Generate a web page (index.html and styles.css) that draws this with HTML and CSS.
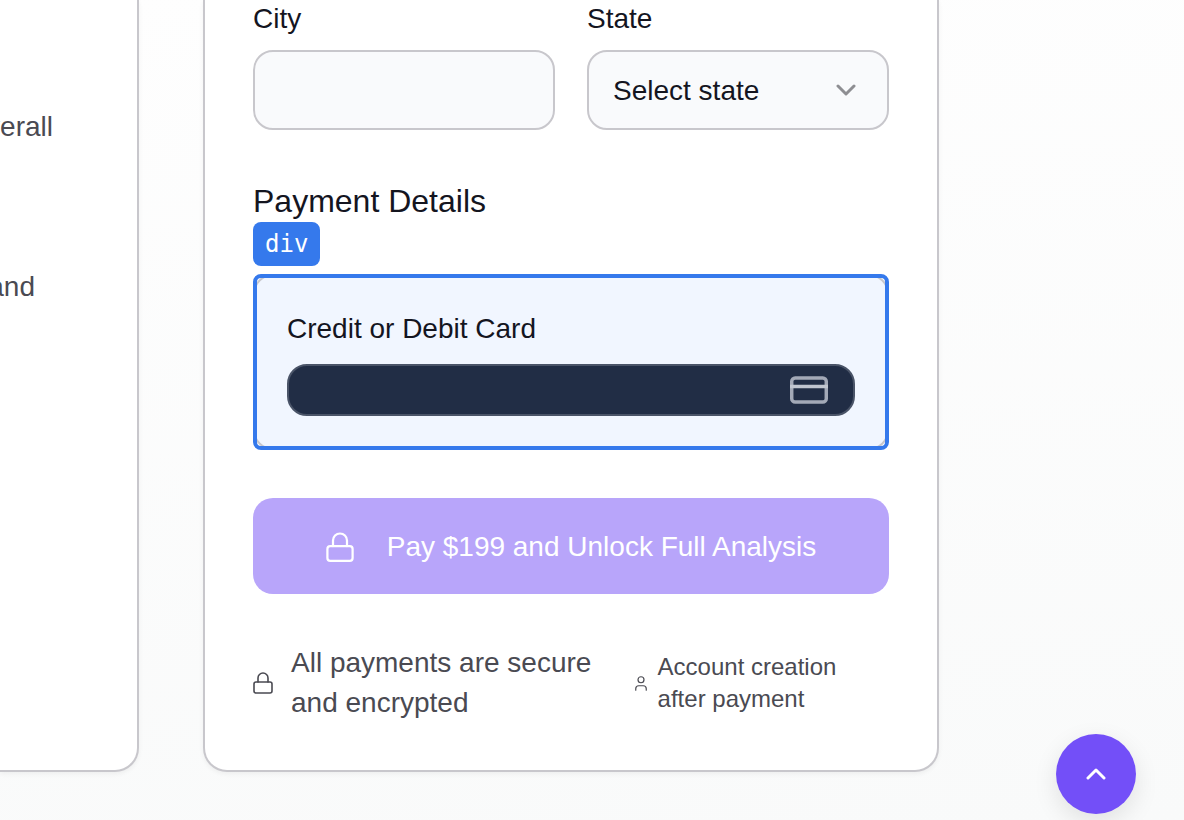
FILE: index.html
```html
<!DOCTYPE html>
<html lang="en">
<head>
<meta charset="utf-8">
<meta name="viewport" content="width=device-width, initial-scale=1">
<title>Payment Details</title>
<link rel="stylesheet" href="styles.css">
</head>
<body>
<main class="page">
  <section class="card summary">
    <p class="summary-line">overall</p>
    <p class="summary-line summary-line-short">and</p>
  </section>
  <form class="card checkout">
    <div class="fields">
      <div class="field">
        <label for="city">City</label>
        <input class="control" id="city" type="text">
      </div>
      <div class="field">
        <label for="state">State</label>
        <div class="select-wrap">
          <select class="control" id="state"><option>Select state</option></select>
          <svg class="select-arrow" viewBox="0 0 20 12" aria-hidden="true"><path d="M2 2l8 8 8-8"/></svg>
        </div>
      </div>
    </div>
    <h2 class="heading">Payment Details</h2>
    <span class="tag">div</span>
    <div class="panel">
      <label for="card-number">Credit or Debit Card</label>
      <div class="card-entry">
        <input class="card-input" id="card-number" type="text">
        <svg class="card-icon" viewBox="1 4 22 16" aria-hidden="true"><rect x="2" y="5" width="20" height="14" rx="2"/><path d="M1 10h22"/></svg>
      </div>
    </div>
    <button class="pay" type="button">
      <svg class="pay-icon" viewBox="2 1 20 22" aria-hidden="true"><rect x="3" y="11" width="18" height="10.5" rx="2"/><path d="M7 11V7a5 5 0 0 1 10 0v4"/></svg>
      <span>Pay $199 and Unlock Full Analysis</span>
    </button>
    <div class="notes">
      <div class="note">
        <svg class="note-lock" viewBox="2 1 20 22" aria-hidden="true"><rect x="3" y="11" width="18" height="11" rx="2"/><path d="M7 11V7a5 5 0 0 1 10 0v4"/></svg>
        <p>All payments are secure and encrypted</p>
      </div>
      <div class="note note-small">
        <svg class="note-user" viewBox="4 2 16 20" aria-hidden="true"><circle cx="12" cy="7" r="4"/><path d="M19 21v-2a4 4 0 0 0-4-4H9a4 4 0 0 0-4 4v2"/></svg>
        <p>Account creation after payment</p>
      </div>
    </div>
  </form>
</main>
<button class="to-top" type="button" aria-label="Back to top">
  <svg viewBox="0 0 20 12" aria-hidden="true"><path d="M2 10l8-8 8 8"/></svg>
</button>
</body>
</html>
```

FILE: styles.css
```css
* { box-sizing: border-box; }

body {
  margin: 0;
  min-height: 100vh;
  background: linear-gradient(175deg, #fefefe 0%, #f9fafa 100%);
  color: #14151f;
  font-family: "Liberation Sans", Arial, sans-serif;
  font-size: 28px;
  line-height: 40px;
}

svg {
  display: block;
  flex: none;
  fill: none;
  stroke: currentColor;
  stroke-linecap: round;
  stroke-linejoin: round;
}

h2, p { margin: 0; font-weight: 400; }

input, select, button { font: inherit; color: inherit; }

label { display: block; }

.page {
  display: grid;
  grid-template-columns: 139px minmax(0, 736px);
  gap: 64px;
  padding-bottom: 48px;
}

.card {
  background: #ffffff;
  border: 2px solid #c8c7cc;
  border-top: 0;
  box-shadow: 0 2px 5px rgba(0, 0, 0, 0.05);
}

.summary {
  display: flex;
  flex-direction: column;
  gap: 120px;
  padding-top: 107px;
  border-left: 0;
  border-radius: 0 0 24px 0;
  overflow: hidden;
  color: #4a4a52;
}

.summary-line {
  display: flex;
  justify-content: flex-end;
  padding-right: 84px;
}

.summary-line-short { padding-right: 102px; }

.checkout {
  padding: 0 48px 47px;
  border-radius: 0 0 24px 24px;
}

.fields {
  display: grid;
  grid-template-columns: 1fr 1fr;
  gap: 32px;
}

.field label { margin-bottom: 12px; line-height: 38px; }

.control {
  display: block;
  width: 100%;
  height: 80px;
  padding: 2px 24px 0;
  border: 2px solid #c8c7cc;
  border-radius: 20px;
  background: #f9fafc;
  appearance: none;
}

.select-wrap, .card-entry { position: relative; }

.select-arrow {
  position: absolute;
  top: 34px;
  right: 33px;
  width: 20px;
  height: 12px;
  color: #8e8e92;
  stroke-width: 3;
  pointer-events: none;
}

.heading {
  margin-top: 52px;
  padding-bottom: 2px;
  font-size: 32px;
  line-height: 38px;
}

.tag {
  display: block;
  width: fit-content;
  padding: 0 12px;
  border-radius: 8px;
  background: #3579ec;
  color: #ffffff;
  font-family: "DejaVu Sans Mono", monospace;
  font-size: 24px;
  line-height: 44px;
}

.panel {
  position: relative;
  margin-top: 8px;
  padding: 32px;
  border: 2px solid #c8c7cc;
  border-radius: 20px;
  background: #f1f6ff;
}

/* Selection outline over the panel */
.panel::after {
  content: "";
  position: absolute;
  inset: -2px;
  border: 4px solid #3579ec;
  border-radius: 8px;
  pointer-events: none;
}

.panel label { margin-bottom: 14px; line-height: 42px; }

.card-input {
  display: block;
  width: 100%;
  height: 52px;
  padding: 0 80px 0 24px;
  border: 2px solid #4a5468;
  border-radius: 20px;
  background: #212d45;
  color: #ffffff;
}

.card-icon {
  position: absolute;
  top: 12px;
  right: 27px;
  width: 38px;
  height: 28px;
  color: #a3a9b7;
  stroke-width: 2;
}

.card-icon path { stroke: #c0c5cf; stroke-linecap: butt; }

.pay {
  display: flex;
  align-items: center;
  justify-content: center;
  gap: 33px;
  width: 100%;
  height: 96px;
  margin-top: 48px;
  padding: 2px 24px 0;
  border: 0;
  border-radius: 20px;
  background: #b8a5fa;
  color: #ffffff;
}

.pay-icon { width: 28px; height: 31px; stroke-width: 1.6; }

.notes {
  display: grid;
  grid-template-columns: 3fr 2fr;
  margin-top: 49px;
  color: #4a4a52;
}

.note {
  display: flex;
  align-items: center;
  gap: 18px;
}

.note-lock { width: 20px; height: 22px; stroke-width: 1.6; }

.note-small {
  gap: 11px;
  padding-right: 32px;
  font-size: 24px;
  line-height: 32px;
}

.note-user { width: 12px; height: 15px; stroke-width: 1.6; }

.to-top {
  position: fixed;
  right: 48px;
  bottom: 6px;
  display: grid;
  place-items: center;
  width: 80px;
  height: 80px;
  padding: 0;
  border: 0;
  border-radius: 50%;
  background: #734ff8;
  color: #ffffff;
  box-shadow: 0 8px 24px rgba(0, 0, 0, 0.1);
}

.to-top svg { width: 20px; height: 12px; stroke-width: 3; }
```
